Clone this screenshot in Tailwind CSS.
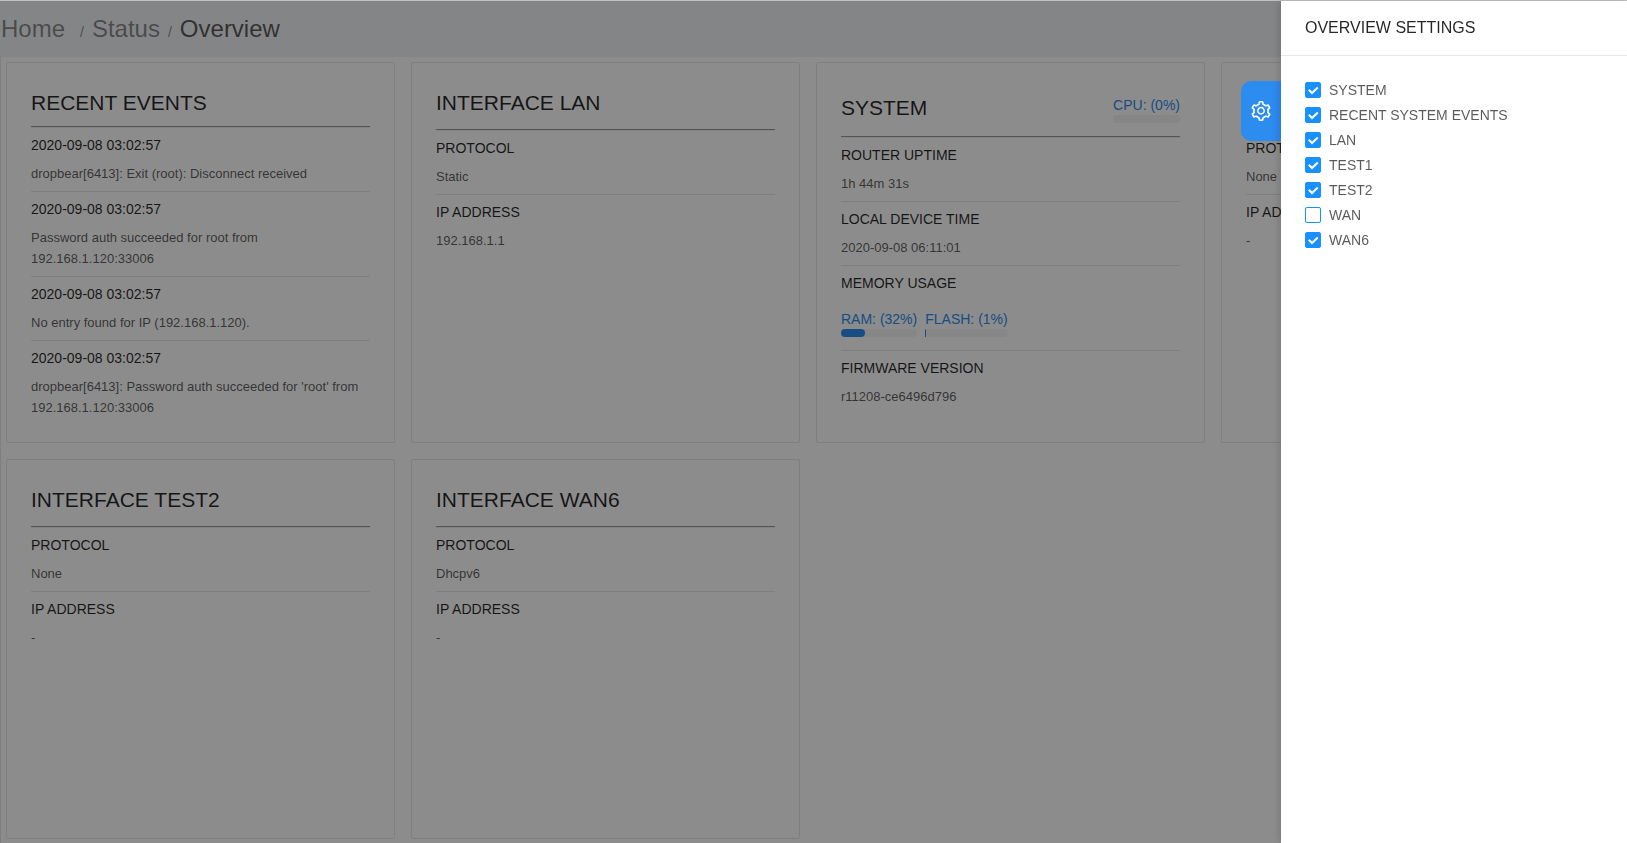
<!DOCTYPE html>
<html lang="en">
<head>
<meta charset="utf-8">
<meta name="viewport" content="width=device-width, initial-scale=1">
<title>Overview</title>
<script src="https://cdn.jsdelivr.net/npm/@tailwindcss/browser@4"></script>
</head>
<body class="min-h-screen overflow-hidden border-t border-[#c1c1c1] bg-white font-['Liberation_Sans',Arial,sans-serif] text-sm text-black/65">

<nav aria-label="Breadcrumb" class="flex h-14 items-center bg-[#f0f2f5] pl-px">
  <ol class="flex items-baseline text-2xl text-black/45">
    <li class="mr-[7px]"><a href="#home">Home</a></li>
    <li class="mx-2 text-sm" aria-hidden="true">/</li>
    <li><a href="#status">Status</a></li>
    <li class="mx-2 text-sm" aria-hidden="true">/</li>
    <li class="text-black/65" aria-current="page">Overview</li>
  </ol>
</nav>

<main class="grid grid-cols-4 gap-4 border-l border-[#e8e8e8] pt-[5px] pr-[17px] pb-1 pl-[5px]">

  <section class="min-h-[381px] rounded-xs border border-[#e8e8e8] p-6">
    <h2 class="text-[21px] leading-8 text-black/85">RECENT EVENTS</h2>
    <hr class="mt-[7px] border-t border-b border-t-[#9a9a9a] border-b-[#eeeeee]">
    <div class="divide-y divide-[#e8e8e8] leading-[21px]">
      <div class="py-[7px]">
        <h3 class="text-black/85">2020-09-08 03:02:57</h3>
        <p class="mt-[7px] text-[13px] leading-[21px]">dropbear[6413]: Exit (root): Disconnect received</p>
      </div>
      <div class="py-[7px]">
        <h3 class="text-black/85">2020-09-08 03:02:57</h3>
        <p class="mt-[7px] text-[13px] leading-[21px]">Password auth succeeded for root from 192.168.1.120:33006</p>
      </div>
      <div class="py-[7px]">
        <h3 class="text-black/85">2020-09-08 03:02:57</h3>
        <p class="mt-[7px] text-[13px] leading-[21px]">No entry found for IP (192.168.1.120).</p>
      </div>
      <div class="pt-[7px]">
        <h3 class="text-black/85">2020-09-08 03:02:57</h3>
        <p class="mt-[7px] text-[13px] leading-[21px]">dropbear[6413]: Password auth succeeded for 'root' from 192.168.1.120:33006</p>
      </div>
    </div>
  </section>

  <section class="min-h-[381px] rounded-xs border border-[#e8e8e8] p-6">
    <h2 class="text-[21px] leading-8 text-black/85">INTERFACE LAN</h2>
    <hr class="mt-[10px] border-t border-b border-t-[#9a9a9a] border-b-[#eeeeee]">
    <dl class="divide-y divide-[#e8e8e8] leading-[21px]">
      <div class="py-[7px]">
        <dt class="text-black/85">PROTOCOL</dt>
        <dd class="mt-[7px] text-[13px] leading-[21px]">Static</dd>
      </div>
      <div class="pt-[7px]">
        <dt class="text-black/85">IP ADDRESS</dt>
        <dd class="mt-[7px] text-[13px] leading-[21px]">192.168.1.1</dd>
      </div>
    </dl>
  </section>

  <section class="min-h-[381px] rounded-xs border border-[#e8e8e8] p-6">
    <div class="flex items-center justify-between">
      <h2 class="text-[21px] leading-[42px] text-black/85">SYSTEM</h2>
      <div class="pt-0.5 leading-5 text-[#2d8cf0]">
        <div id="cpu">CPU: (0%)</div>
        <div role="progressbar" aria-labelledby="cpu" aria-valuenow="0" class="h-2 rounded-full bg-[#f5f5f5]"></div>
      </div>
    </div>
    <hr class="mt-[7px] border-t border-b border-t-[#9a9a9a] border-b-[#eeeeee]">
    <dl class="divide-y divide-[#e8e8e8] leading-[21px]">
      <div class="py-[7px]">
        <dt class="text-black/85">ROUTER UPTIME</dt>
        <dd class="mt-[7px] text-[13px] leading-[21px]">1h 44m 31s</dd>
      </div>
      <div class="py-[7px]">
        <dt class="text-black/85">LOCAL DEVICE TIME</dt>
        <dd class="mt-[7px] text-[13px] leading-[21px]">2020-09-08 06:11:01</dd>
      </div>
      <div class="pt-[7px] pb-[13px]">
        <dt class="text-black/85">MEMORY USAGE</dt>
        <dd class="mt-[15px] flex gap-2 leading-5 text-[#2d8cf0]">
          <div>
            <div id="ram">RAM: (32%)</div>
            <div role="progressbar" aria-labelledby="ram" aria-valuenow="32" class="h-2 rounded-full bg-[#f5f5f5]">
              <div class="h-2 rounded-full bg-[#2d8cf0]" style="width:32%"></div>
            </div>
          </div>
          <div>
            <div id="flash">FLASH: (1%)</div>
            <div role="progressbar" aria-labelledby="flash" aria-valuenow="1" class="h-2 rounded-full bg-[#f5f5f5]">
              <div class="h-2 rounded-full bg-[#2d8cf0]" style="width:1%"></div>
            </div>
          </div>
        </dd>
      </div>
      <div class="pt-[7px]">
        <dt class="text-black/85">FIRMWARE VERSION</dt>
        <dd class="mt-[7px] text-[13px] leading-[21px]">r11208-ce6496d796</dd>
      </div>
    </dl>
  </section>

  <section class="min-h-[381px] rounded-xs border border-[#e8e8e8] p-6">
    <h2 class="text-[21px] leading-8 text-black/85">INTERFACE TEST1</h2>
    <hr class="mt-[10px] border-t border-b border-t-[#9a9a9a] border-b-[#eeeeee]">
    <dl class="divide-y divide-[#e8e8e8] leading-[21px]">
      <div class="py-[7px]">
        <dt class="text-black/85">PROTOCOL</dt>
        <dd class="mt-[7px] text-[13px] leading-[21px]">None</dd>
      </div>
      <div class="pt-[7px]">
        <dt class="text-black/85">IP ADDRESS</dt>
        <dd class="mt-[7px] text-[13px] leading-[21px]">-</dd>
      </div>
    </dl>
  </section>

  <section class="min-h-[380px] rounded-xs border border-[#e8e8e8] p-6">
    <h2 class="text-[21px] leading-8 text-black/85">INTERFACE TEST2</h2>
    <hr class="mt-[10px] border-t border-b border-t-[#9a9a9a] border-b-[#eeeeee]">
    <dl class="divide-y divide-[#e8e8e8] leading-[21px]">
      <div class="py-[7px]">
        <dt class="text-black/85">PROTOCOL</dt>
        <dd class="mt-[7px] text-[13px] leading-[21px]">None</dd>
      </div>
      <div class="pt-[7px]">
        <dt class="text-black/85">IP ADDRESS</dt>
        <dd class="mt-[7px] text-[13px] leading-[21px]">-</dd>
      </div>
    </dl>
  </section>

  <section class="min-h-[380px] rounded-xs border border-[#e8e8e8] p-6">
    <h2 class="text-[21px] leading-8 text-black/85">INTERFACE WAN6</h2>
    <hr class="mt-[10px] border-t border-b border-t-[#9a9a9a] border-b-[#eeeeee]">
    <dl class="divide-y divide-[#e8e8e8] leading-[21px]">
      <div class="py-[7px]">
        <dt class="text-black/85">PROTOCOL</dt>
        <dd class="mt-[7px] text-[13px] leading-[21px]">Dhcpv6</dd>
      </div>
      <div class="pt-[7px]">
        <dt class="text-black/85">IP ADDRESS</dt>
        <dd class="mt-[7px] text-[13px] leading-[21px]">-</dd>
      </div>
    </dl>
  </section>
</main>

<!-- Scrim behind the settings drawer -->
<div class="fixed inset-x-0 top-px bottom-0 bg-black/45"></div>

<aside aria-labelledby="drawer-title" class="fixed top-px right-0 bottom-0 w-[346px]">
  <button type="button" aria-label="Toggle overview settings" class="absolute top-20 right-full flex h-15 w-10 items-center justify-center rounded-l-[10px] bg-[#2d8cf0] text-white">
    <svg class="size-5" viewBox="64 64 896 896" fill="currentColor" fill-rule="evenodd" aria-hidden="true"><path d="M924.8 625.7l-65.5-56c3.1-19 4.7-38.4 4.7-57.8s-1.6-38.8-4.7-57.8l65.5-56a32.03 32.03 0 0 0 9.3-35.2l-.9-2.6a442.5 442.5 0 0 0-79.7-137.9l-1.8-2.1a32.12 32.12 0 0 0-35.1-9.5l-81.3 28.9c-30-24.6-63.5-44-99.7-57.6l-15.7-85a32.05 32.05 0 0 0-25.8-25.7l-2.7-.5c-52.1-9.4-106.9-9.4-159 0l-2.7.5a32.05 32.05 0 0 0-25.8 25.7l-15.8 85.4a351.86 351.86 0 0 0-99 57.4l-81.9-29.1a32 32 0 0 0-35.1 9.5l-1.8 2.1a446.02 446.02 0 0 0-79.7 137.9l-.9 2.6c-4.5 12.5-.8 26.5 9.3 35.2l66.3 56.6c-3.1 18.8-4.6 38-4.6 57.1 0 19.2 1.5 38.4 4.6 57.1L99 625.5a32.03 32.03 0 0 0-9.3 35.2l.9 2.6c18.1 50.4 44.9 96.9 79.7 137.9l1.8 2.1a32.12 32.12 0 0 0 35.1 9.5l81.9-29.1c29.8 24.5 63.1 43.9 99 57.4l15.8 85.4a32.05 32.05 0 0 0 25.8 25.7l2.7.5a449.4 449.4 0 0 0 159 0l2.7-.5a32.05 32.05 0 0 0 25.8-25.7l15.7-85a350 350 0 0 0 99.7-57.6l81.3 28.9a32 32 0 0 0 35.1-9.5l1.8-2.1c34.8-41.1 61.6-87.5 79.7-137.9l.9-2.6c4.5-12.3.8-26.3-9.3-35zM788.3 465.9c2.5 15.1 3.8 30.6 3.8 46.1s-1.3 31-3.8 46.1l-6.6 40.1 74.7 63.9a370.03 370.03 0 0 1-42.6 73.6L721 702.8l-31.4 25.8c-23.9 19.6-50.5 35-79.3 45.8l-38.1 14.3-17.9 97a377.5 377.5 0 0 1-85 0l-17.9-97.2-37.8-14.5c-28.5-10.8-55-26.2-78.7-45.7l-31.4-25.9-93.4 33.2c-17-22.9-31.2-47.6-42.6-73.6l75.5-64.5-6.5-40c-2.4-14.9-3.7-30.3-3.7-45.5 0-15.3 1.2-30.6 3.7-45.5l6.5-40-75.5-64.5c11.3-26.1 25.6-50.7 42.6-73.6l93.4 33.2 31.4-25.9c23.7-19.5 50.2-34.9 78.7-45.7l37.9-14.3 17.9-97.2c28.1-3.2 56.8-3.2 85 0l17.9 97 38.1 14.3c28.7 10.8 55.4 26.2 79.3 45.8l31.4 25.8 92.8-32.9c17 22.9 31.2 47.6 42.6 73.6L781.8 426l6.5 39.9zM512 326c-97.2 0-176 78.8-176 176s78.8 176 176 176 176-78.8 176-176-78.8-176-176-176zm79.2 255.2A111.6 111.6 0 0 1 512 614c-29.9 0-58-11.7-79.2-32.8A111.6 111.6 0 0 1 400 502c0-29.9 11.7-58 32.8-79.2C454 401.6 482.1 390 512 390c29.9 0 58 11.6 79.2 32.8A111.6 111.6 0 0 1 624 502c0 29.9-11.7 58-32.8 79.2z"/></svg>
  </button>
  <div class="relative h-full bg-white shadow-[-2px_0_8px_rgba(0,0,0,0.15)]">
    <h2 id="drawer-title" class="border-b border-[#e8e8e8] px-6 py-4 text-base leading-[22px] text-black/85">OVERVIEW SETTINGS</h2>
    <div class="flex flex-col items-start gap-[5px] p-6 leading-5">
      <label class="flex items-center gap-2">
        <span class="grid"><input type="checkbox" checked class="peer col-start-1 row-start-1 size-4 appearance-none rounded-xs border border-[#1890ff] bg-white checked:bg-[#1890ff]"><svg class="invisible col-start-1 row-start-1 size-4 peer-checked:visible" viewBox="0 0 16 16" fill="none" stroke="#fff" stroke-width="2" aria-hidden="true"><path d="M3.8 7.8 7 11l5.8-5.5"/></svg></span><span>SYSTEM</span></label>
      <label class="flex items-center gap-2">
        <span class="grid"><input type="checkbox" checked class="peer col-start-1 row-start-1 size-4 appearance-none rounded-xs border border-[#1890ff] bg-white checked:bg-[#1890ff]"><svg class="invisible col-start-1 row-start-1 size-4 peer-checked:visible" viewBox="0 0 16 16" fill="none" stroke="#fff" stroke-width="2" aria-hidden="true"><path d="M3.8 7.8 7 11l5.8-5.5"/></svg></span><span>RECENT SYSTEM EVENTS</span></label>
      <label class="flex items-center gap-2">
        <span class="grid"><input type="checkbox" checked class="peer col-start-1 row-start-1 size-4 appearance-none rounded-xs border border-[#1890ff] bg-white checked:bg-[#1890ff]"><svg class="invisible col-start-1 row-start-1 size-4 peer-checked:visible" viewBox="0 0 16 16" fill="none" stroke="#fff" stroke-width="2" aria-hidden="true"><path d="M3.8 7.8 7 11l5.8-5.5"/></svg></span><span>LAN</span></label>
      <label class="flex items-center gap-2">
        <span class="grid"><input type="checkbox" checked class="peer col-start-1 row-start-1 size-4 appearance-none rounded-xs border border-[#1890ff] bg-white checked:bg-[#1890ff]"><svg class="invisible col-start-1 row-start-1 size-4 peer-checked:visible" viewBox="0 0 16 16" fill="none" stroke="#fff" stroke-width="2" aria-hidden="true"><path d="M3.8 7.8 7 11l5.8-5.5"/></svg></span><span>TEST1</span></label>
      <label class="flex items-center gap-2">
        <span class="grid"><input type="checkbox" checked class="peer col-start-1 row-start-1 size-4 appearance-none rounded-xs border border-[#1890ff] bg-white checked:bg-[#1890ff]"><svg class="invisible col-start-1 row-start-1 size-4 peer-checked:visible" viewBox="0 0 16 16" fill="none" stroke="#fff" stroke-width="2" aria-hidden="true"><path d="M3.8 7.8 7 11l5.8-5.5"/></svg></span><span>TEST2</span></label>
      <label class="flex items-center gap-2">
        <span class="grid"><input type="checkbox" class="peer col-start-1 row-start-1 size-4 appearance-none rounded-xs border border-[#1890ff] bg-white checked:bg-[#1890ff]"><svg class="invisible col-start-1 row-start-1 size-4 peer-checked:visible" viewBox="0 0 16 16" fill="none" stroke="#fff" stroke-width="2" aria-hidden="true"><path d="M3.8 7.8 7 11l5.8-5.5"/></svg></span><span>WAN</span></label>
      <label class="flex items-center gap-2">
        <span class="grid"><input type="checkbox" checked class="peer col-start-1 row-start-1 size-4 appearance-none rounded-xs border border-[#1890ff] bg-white checked:bg-[#1890ff]"><svg class="invisible col-start-1 row-start-1 size-4 peer-checked:visible" viewBox="0 0 16 16" fill="none" stroke="#fff" stroke-width="2" aria-hidden="true"><path d="M3.8 7.8 7 11l5.8-5.5"/></svg></span><span>WAN6</span></label>
    </div>
  </div>
</aside>

</body>
</html>
